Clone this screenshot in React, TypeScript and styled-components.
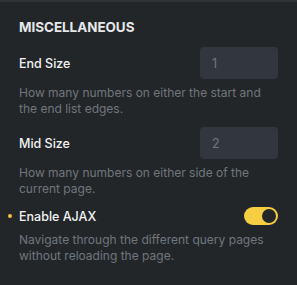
import React, { useState } from 'react';
import styled, { createGlobalStyle } from 'styled-components';

const GlobalStyle = createGlobalStyle`
    html, body {
        margin: 0;
        padding: 0;
        background: #232629;
    }
    body {
        font-family: Inter, "Noto Sans", sans-serif;
        -webkit-font-smoothing: antialiased;
    }
`;

interface FieldProps {
    label: string;
    value: string;
    description: string;
}

const NumberField: React.FC<FieldProps> = ({ label, value, description }) => (
    <Field>
        <Row $tall>
            <Label>{label}</Label>
            <Input defaultValue={value} />
        </Row>
        <Description>{description}</Description>
    </Field>
);

const App: React.FC = () => {
    const [ajax, setAjax] = useState(true);

    return (
        <>
            <GlobalStyle />
            <Panel>
                <Title>Miscellaneous</Title>
                <NumberField
                    label="End Size"
                    value="1"
                    description="How many numbers on either the start and the end list edges."
                />
                <NumberField
                    label="Mid Size"
                    value="2"
                    description="How many numbers on either side of the current page."
                />
                <Field>
                    <Row $modified>
                        <Label>Enable AJAX</Label>
                        <Switch $on={ajax} onClick={() => setAjax(!ajax)}>
                            <Knob />
                        </Switch>
                    </Row>
                    <Description $gap={7}>
                        Navigate through the different query pages without reloading the page.
                    </Description>
                </Field>
            </Panel>
        </>
    );
};
export default App;

const Panel = styled.div`
    width: 297px;
    height: 285px;
    box-sizing: border-box;
    border-top: 2px solid #2f3237;
    padding: 17px 19px 0 19px;
    background: #232629;
`;

const Title = styled.div`
    font-size: 13.4px;
    font-weight: 700;
    text-transform: uppercase;
    color: #e6e8ea;
    line-height: 16px;
    margin-bottom: 12px;
`;

const Field = styled.div`
    margin-bottom: 10px;
`;

const Row = styled.div<{ $modified?: boolean; $tall?: boolean }>`
    position: relative;
    display: flex;
    align-items: center;
    justify-content: space-between;
    min-height: ${(p) => (p.$tall ? '32px' : '18px')};

    &::before {
        content: '';
        display: ${(p) => (p.$modified ? 'block' : 'none')};
        position: absolute;
        left: -11px;
        top: 50%;
        width: 4px;
        height: 4px;
        margin-top: -2px;
        border-radius: 50%;
        background: #f0c53c;
    }
`;

const Label = styled.div`
    font-size: 12.5px;
    font-weight: 500;
    color: #f1f2f3;
`;

const Input = styled.input`
    width: 78px;
    height: 32px;
    box-sizing: border-box;
    border: none;
    outline: none;
    border-radius: 4px;
    background: #32373d;
    padding: 0 12px;
    font-family: inherit;
    font-size: 12.5px;
    color: #6e7780;
`;

const Description = styled.div<{ $gap?: number }>`
    margin-top: ${(p) => p.$gap ?? 6}px;
    font-size: 12px;
    line-height: 16px;
    color: #70767d;
`;

const Switch = styled.div<{ $on: boolean }>`
    width: 34px;
    height: 18px;
    box-sizing: border-box;
    border-radius: 9px;
    background: ${(p) => (p.$on ? '#f5ce42' : '#4a4f55')};
    display: flex;
    align-items: center;
    justify-content: ${(p) => (p.$on ? 'flex-end' : 'flex-start')};
    padding: 2px;
    cursor: pointer;
`;

const Knob = styled.div`
    width: 14px;
    height: 14px;
    border-radius: 50%;
    background: #232629;
`;
